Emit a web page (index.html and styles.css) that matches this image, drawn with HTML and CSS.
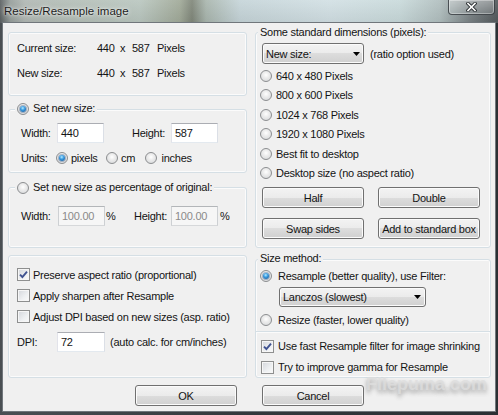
FILE: index.html
```html
<!DOCTYPE html>
<html>
<head>
<meta charset="utf-8">
<link rel="stylesheet" href="styles.css">
</head>
<body>
<div class="window">
  <div class="titlebar">
    <span class="title">Resize/Resample image</span>
    <div class="close">
      <svg width="11" height="10" viewBox="0 0 11 10"><path d="M2 1.5 L9 8.5 M9 1.5 L2 8.5" stroke="#2c3134" stroke-width="3.4" stroke-linecap="square"/><path d="M2 1.5 L9 8.5 M9 1.5 L2 8.5" stroke="#ffffff" stroke-width="1.6" stroke-linecap="square"/></svg>
    </div>
  </div>
  <div class="client">
    <div class="columns">
      <div class="col col-left">
        <div class="group g-info">
          <div class="info-row"><span class="info-label">Current size:</span><span class="n1">440</span><span class="nx">x</span><span class="n2">587</span><span>Pixels</span></div>
          <div class="info-row second"><span class="info-label">New size:</span><span class="n1">440</span><span class="nx">x</span><span class="n2">587</span><span>Pixels</span></div>
        </div>
        <div class="group g-size">
          <div class="legend"><span class="radio checked"></span><span>Set new size:</span></div>
          <div class="field-row fr-size">
            <span class="lbl-w">Width:</span><span class="input">440</span>
            <span class="lbl-h">Height:</span><span class="input">587</span>
          </div>
          <div class="units-row">
            <span class="units-lbl">Units:</span>
            <span class="opt opt1"><span class="radio checked"></span>pixels</span>
            <span class="opt opt2"><span class="radio"></span>cm</span>
            <span class="opt opt3"><span class="radio"></span>inches</span>
          </div>
        </div>
        <div class="group g-pct">
          <div class="legend"><span class="radio"></span><span>Set new size as percentage of original:</span></div>
          <div class="field-row fr-pct">
            <span class="lbl-w2">Width:</span><span class="input disabled">100.00</span><span class="pct">%</span>
            <span class="lbl-h2">Height:</span><span class="input disabled">100.00</span><span class="pct2">%</span>
          </div>
        </div>
        <div class="group g-opts">
          <div class="check-row"><span class="check checked"><svg width="11" height="11" viewBox="0 0 11 11"><path d="M2 5.6 L4.4 8 L9 2.6" fill="none" stroke="#3f5290" stroke-width="1.9"/></svg></span>Preserve aspect ratio (proportional)</div>
          <div class="check-row"><span class="check"></span>Apply sharpen after Resample</div>
          <div class="check-row"><span class="check"></span>Adjust DPI based on new sizes (asp. ratio)</div>
          <div class="dpi-row"><span class="dpi-lbl">DPI:</span><span class="input dpi-input">72</span><span class="dpi-note">(auto calc. for cm/inches)</span></div>
        </div>
      </div>
      <div class="col col-right">
        <div class="group g-std">
          <div class="legend legend-text">Some standard dimensions (pixels):</div>
          <div class="combo-row">
            <span class="combo combo-new"><span>New size:</span><svg width="7" height="4" viewBox="0 0 7 4"><polygon points="0,0 7,0 3.5,4" fill="#000"/></svg></span>
            <span class="combo-note">(ratio option used)</span>
          </div>
          <div class="radio-list">
            <div class="radio-row"><span class="radio"></span>640 x 480 Pixels</div>
            <div class="radio-row"><span class="radio"></span>800 x 600 Pixels</div>
            <div class="radio-row"><span class="radio"></span>1024 x 768 Pixels</div>
            <div class="radio-row"><span class="radio"></span>1920 x 1080 Pixels</div>
            <div class="radio-row"><span class="radio"></span>Best fit to desktop</div>
            <div class="radio-row"><span class="radio"></span>Desktop size (no aspect ratio)</div>
          </div>
          <div class="btn-row"><span class="btn">Half</span><span class="btn">Double</span></div>
          <div class="btn-row second"><span class="btn">Swap sides</span><span class="btn">Add to standard box</span></div>
        </div>
        <div class="group g-method">
          <div class="legend legend-text">Size method:</div>
          <div class="m-row m-first"><span class="radio checked"></span>Resample (better quality), use Filter:</div>
          <div class="combo combo-filter"><span>Lanczos (slowest)</span><svg width="7" height="4" viewBox="0 0 7 4"><polygon points="0,0 7,0 3.5,4" fill="#000"/></svg></div>
          <div class="m-row m-resize"><span class="radio"></span>Resize (faster, lower quality)</div>
          <div class="sep"></div>
          <div class="m-row m-c1"><span class="check checked"><svg width="11" height="11" viewBox="0 0 11 11"><path d="M2 5.6 L4.4 8 L9 2.6" fill="none" stroke="#3f5290" stroke-width="1.9"/></svg></span>Use fast Resample filter for image shrinking</div>
          <div class="m-row m-c2"><span class="check"></span>Try to improve gamma for Resample</div>
        </div>
      </div>
    </div>
    <div class="dialog-btns"><span class="btn dbtn">OK</span><span class="btn dbtn">Cancel</span></div>
  </div>
  <div class="watermark">Filepuma.com</div>
</div>
</body>
</html>
```

FILE: styles.css
```css
* { box-sizing: border-box; }
html, body { margin: 0; padding: 0; }
body {
  width: 498px;
  height: 415px;
  overflow: hidden;
  background: #3a3f44;
  font-family: "Liberation Sans", Arial, sans-serif;
  font-size: 11px;
  letter-spacing: -0.25px;
  color: #141414;
}
.window {
  position: relative;
  width: 498px;
  height: 415px;
  background: linear-gradient(90deg, #4a4f53, #33383c 50%, #2b3034);
  display: flex;
  flex-direction: column;
}
.titlebar {
  flex: none;
  height: 23px;
  display: flex;
  justify-content: space-between;
  align-items: flex-start;
  background:
    linear-gradient(180deg, rgba(255,255,255,0.08), rgba(0,0,0,0.06)),
    linear-gradient(90deg, #5b6062 0px, #969e9b 10px, #b1b8b4 25px, #b3bdb6 60px, #bac7c0 140px, #a1aa99 180px, #80877a 192px, #a9b6ae 206px, #c6d5d9 240px, #d2e0e4 330px, #c9dadb 400px, #b1bfbf 440px, #7a8285 470px, #53595c 498px);
}
.title {
  margin: 4px 0 0 4px;
  font-size: 11.5px;
  line-height: 14px;
  letter-spacing: 0;
  color: #1c1c1c;
  text-shadow: 0 0 5px rgba(255,255,255,0.9), 0 0 2px rgba(255,255,255,0.7);
}
.close {
  width: 47px;
  height: 16px;
  margin: -1px 3px 0 0;
  border: 1px solid rgba(45,50,55,0.8);
  border-radius: 0 0 4px 4px;
  background: linear-gradient(180deg, rgba(255,255,255,0.35), rgba(230,238,238,0.15));
  box-shadow: inset 0 0 0 1px rgba(255,255,255,0.35);
  display: flex;
  align-items: center;
  justify-content: center;
}
.client {
  flex: none;
  height: 388px;
  margin: 0 3px;
  padding: 9px 4px 0 5px;
  background: #f0f0f0;
  box-shadow: 0 0 0 1px #70767b;
}
.columns { display: flex; gap: 8px; }
.col { display: flex; flex-direction: column; }
.col-left { width: 239px; }
.col-right { width: 236px; }
.group {
  border: 1px solid #d5dfe5;
  border-radius: 3px;
  box-shadow: inset 0 0 0 1px #fbfbfb;
}
.g-info { height: 64px; padding: 8px 0 0 8px; }
.g-size { height: 64px; margin-top: 13px; }
.g-pct { height: 61px; margin-top: 14px; }
.g-opts { height: 123px; margin-top: 7px; padding: 8px 0 0 8px; }
.g-std { height: 216px; }
.g-method { height: 119px; margin-top: 11px; }

.legend {
  display: flex;
  align-items: center;
  width: max-content;
  height: 15px;
  line-height: 15px;
  margin: -9px 0 0 6px;
  padding: 0 2px;
  background: #f0f0f0;
}
.g-pct .legend { margin-top: -8px; }
.legend .radio { margin-right: 4px; }
.legend-text { margin-left: 2px; margin-top: -8px; }
.g-method .legend-text { margin-top: -9px; }

.info-row { display: flex; line-height: 15px; }
.info-row.second { margin-top: 10px; }
.info-label { width: 80px; }
.n1 { width: 23px; }
.nx { width: 12px; }
.n2 { width: 25px; }

.radio {
  flex: none;
  width: 12px;
  height: 12px;
  border-radius: 50%;
  border: 1px solid #8c8e90;
  background: radial-gradient(circle at 50% 40%, #ffffff 0, #eeeeee 35%, #d2d4d6 100%);
  display: inline-flex;
  align-items: center;
  justify-content: center;
}
.radio.checked::after {
  content: "";
  width: 6px;
  height: 6px;
  border-radius: 50%;
  background: radial-gradient(circle at 45% 35%, #b6ecff 0, #3b9be0 40%, #0f4c8c 100%);
  box-shadow: 0 0 0 1px rgba(30,70,120,0.35);
}
.check {
  flex: none;
  width: 13px;
  height: 13px;
  border: 1px solid #8e8f8f;
  background: linear-gradient(135deg, #d3d6db 0, #eef0f2 60%, #fafafa 100%);
  box-shadow: inset 0 0 0 1px #f6f6f6;
  display: inline-flex;
  align-items: center;
  justify-content: center;
}
.input {
  flex: none;
  width: 47px;
  height: 20px;
  line-height: 18px;
  padding-left: 3px;
  background: #fff;
  border: 1px solid;
  border-color: #abadb3 #dbdfe6 #e3e9ef #e2e3ea;
  color: #141414;
}
.input.disabled {
  background: #f6f6f6;
  border-color: #b3b6b9 #cdd0d3 #d6d8da #cdd0d3;
  color: #8a8a8a;
}

.field-row { display: flex; align-items: center; height: 20px; padding-left: 12px; }
.fr-size { margin-top: 7px; }
.fr-pct { margin-top: 11px; }
.lbl-w { width: 36px; }
.lbl-h { margin-left: 28px; width: 39px; }
.lbl-w2 { width: 37px; }
.pct { margin-left: 1px; width: 28px; }
.lbl-h2 { width: 37px; }
.pct2 { margin-left: 2px; }

.units-row { display: flex; align-items: center; height: 15px; margin-top: 7px; padding-left: 12px; }
.units-lbl { width: 35px; }
.opt { display: flex; align-items: center; }
.opt .radio { margin-right: 3px; }
.opt1 { width: 50px; }
.opt2 { width: 38.5px; }
.opt3 .radio { margin-right: 5px; }

.check-row { display: flex; align-items: center; height: 21px; }
.check-row .check { margin-right: 3px; }
.dpi-row { display: flex; align-items: center; height: 20px; margin-top: 5px; }
.dpi-lbl { width: 40px; }
.dpi-input { width: 48px; }
.dpi-note { margin-left: 5px; }

.combo {
  display: flex;
  align-items: center;
  justify-content: space-between;
  height: 21px;
  border: 1px solid #707070;
  border-radius: 3px;
  background: linear-gradient(180deg, #f3f3f3 0, #ebebeb 50%, #dddddd 50%, #d0d0d0 100%);
  box-shadow: inset 0 0 0 1px #fbfbfb;
  padding: 0 3px 0 3px;
  color: #141414;
}
.combo-row { display: flex; align-items: center; margin-top: 3px; padding-left: 6px; }
.combo-new { width: 102px; }
.combo-note { margin-left: 6px; }
.radio-list { margin-top: 2px; padding-left: 4px; }
.radio-row { display: flex; align-items: center; height: 19.5px; }
.radio-row .radio { margin-right: 4px; }

.btn {
  display: flex;
  align-items: center;
  justify-content: center;
  width: 102px;
  height: 21px;
  border: 1px solid #707070;
  border-radius: 3px;
  background: linear-gradient(180deg, #f3f3f3 0, #ebebeb 50%, #dddddd 50%, #d0d0d0 100%);
  box-shadow: inset 0 0 0 1px #fbfbfb;
  color: #141414;
}
.btn-row { display: flex; gap: 14px; padding-left: 6px; margin-top: 4px; }
.btn-row.second { margin-top: 10px; }

.m-row { display: flex; align-items: center; height: 18px; padding-left: 4px; }
.m-row .radio { margin-right: 6px; }
.m-first { margin-top: 1px; }
.combo-filter { width: 147px; height: 20px; margin: 2px 0 0 23px; padding-right: 4px; }
.m-resize { margin-top: 4px; }
.sep { height: 1px; margin-top: 2px; background: #d5dfe5; box-shadow: 0 1px 0 #fbfbfb; }
.m-c1 { margin-top: 5px; padding-left: 5px; }
.m-c2 { margin-top: 3px; padding-left: 5px; }
.m-row .check { margin-right: 4px; }

.dialog-btns { display: flex; justify-content: center; gap: 25px; margin-top: 7px; }
.dbtn { width: 102px; }

.watermark {
  position: absolute;
  left: 366px;
  top: 377px;
  font-size: 18px;
  line-height: 14px;
  font-weight: bold;
  letter-spacing: 0;
  color: rgba(222,222,222,0.8);
  text-shadow: 0 3px 4px rgba(70,70,70,0.45);
}
```
